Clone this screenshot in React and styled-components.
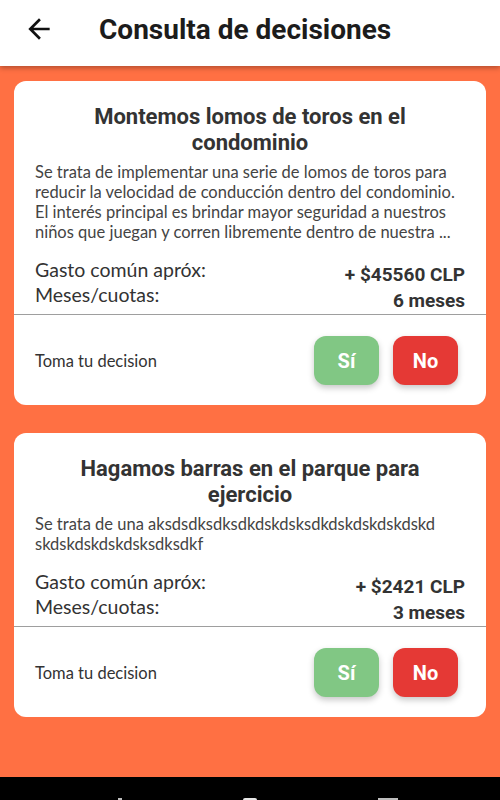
import styled, { createGlobalStyle } from "styled-components"

const Global = createGlobalStyle`
    html, body {
        margin: 0;
        padding: 0;
        background: #ff7043;
    }
    * {
        box-sizing: border-box;
    }
`

const Screen = styled.div`
    width: 500px;
    height: 800px;
    display: flex;
    flex-direction: column;
    background: #ff7043;
    overflow: hidden;
`

const Header = styled.header`
    height: 66px;
    flex-shrink: 0;
    background: #ffffff;
    display: flex;
    align-items: center;
    padding: 0 0 0 23px;
    gap: 44px;
    box-shadow: 0 2px 5px rgba(0, 0, 0, 0.3);
    position: relative;
    z-index: 1;
`

const BackButton = styled.button`
    background: none;
    border: none;
    padding: 0;
    width: 32px;
    height: 32px;
    display: flex;
    align-items: center;
    justify-content: center;
    color: #111;
    margin-top: -8px;
`

const Title = styled.h1`
    margin: 0;
    margin-top: -8px;
    font-family: Roboto, "Liberation Sans", sans-serif;
    font-weight: 700;
    font-size: 28px;
    color: #1c1c1c;
`

const List = styled.main`
    flex: 1;
    display: flex;
    flex-direction: column;
    gap: 28px;
    padding: 15px 14px;
`

const Card = styled.section`
    background: #ffffff;
    border-radius: 12px;
    overflow: hidden;
`

const Body = styled.div`
    padding: 23px 21px 0 21px;
`

const CardTitle = styled.h2`
    margin: 0 0 6px 0;
    padding: 0 34px;
    text-align: center;
    font-family: Roboto, "Liberation Sans", sans-serif;
    font-weight: 700;
    font-size: 22px;
    line-height: 26px;
    color: #333333;
`

const Description = styled.p`
    margin: 0 0 15px 0;
    font-family: Lato, "Liberation Sans", sans-serif;
    font-size: 16.5px;
    line-height: 20px;
    color: #444444;
`

const Detail = styled.div`
    display: grid;
    grid-template-columns: 1fr auto;
`

const Labels = styled.div`
    display: flex;
    flex-direction: column;
    font-family: Lato, "Liberation Sans", sans-serif;
    font-size: 19.5px;
    line-height: 25px;
    color: #333333;
`

const Values = styled.div`
    display: flex;
    flex-direction: column;
    align-items: flex-end;
    padding-top: 5px;
    font-family: Roboto, "Liberation Sans", sans-serif;
    font-weight: 700;
    font-size: 19px;
    line-height: 26px;
    color: #333333;
`

const Footer = styled.div`
    border-top: 1px solid #9e9e9e;
    display: flex;
    align-items: center;
    justify-content: space-between;
    padding: 21px 28px 20px 21px;
`

const Prompt = styled.span`
    font-family: Lato, "Liberation Sans", sans-serif;
    font-size: 16.5px;
    color: #333333;
`

const Buttons = styled.div`
    display: flex;
    gap: 14px;
`

const Vote = styled.button`
    width: 65px;
    height: 49px;
    border: none;
    border-radius: 12px;
    background: ${p => p.$yes ? "#81c784" : "#e53935"};
    color: #ffffff;
    font-family: Roboto, "Liberation Sans", sans-serif;
    font-weight: 700;
    font-size: 20px;
    box-shadow: 0 3px 6px rgba(0, 0, 0, 0.22);
`

const NavBar = styled.div`
    height: 23px;
    flex-shrink: 0;
    background: #000000;
    position: relative;
`

const NavMark = styled.span`
    position: absolute;
    bottom: 0;
    left: ${p => p.$x}px;
    width: ${p => p.$w}px;
    height: 2px;
    border-radius: ${p => p.$round ? "7px 7px 0 0" : "0"};
    background: ${p => p.$light ? "#e6e6e6" : "#bdbdbd"};
`

const decisiones = [
    {
        titulo: "Montemos lomos de toros en el condominio",
        texto: "Se trata de implementar una serie de lomos de toros para reducir la velocidad de conducción dentro del condominio. El interés principal es brindar mayor seguridad a nuestros niños que juegan y corren libremente dentro de nuestra ...",
        gasto: "+ $45560 CLP",
        meses: "6 meses",
    },
    {
        titulo: "Hagamos barras en el parque para ejercicio",
        texto: "Se trata de una aksdsdksdksdkdskdsksdkdskdskdskdskd skdskdskdskdsksdksdkf",
        gasto: "+ $2421 CLP",
        meses: "3 meses",
    },
]

export default function App() {
    return (
        <Screen>
            <Global />
            <Header>
                <BackButton aria-label="volver">
                    <svg width="32" height="32" viewBox="0 0 24 24">
                        <path d="M20 11H7.83l5.59-5.59L12 4l-8 8 8 8 1.41-1.41L7.83 13H20v-2z" fill="currentColor" />
                    </svg>
                </BackButton>
                <Title>Consulta de decisiones</Title>
            </Header>
            <List>
                {decisiones.map(d => (
                    <Card key={d.titulo}>
                        <Body>
                            <CardTitle>{d.titulo}</CardTitle>
                            <Description>{d.texto}</Description>
                            <Detail>
                                <Labels>
                                    <span>Gasto común apróx:</span>
                                    <span>Meses/cuotas:</span>
                                </Labels>
                                <Values>
                                    <span>{d.gasto}</span>
                                    <span>{d.meses}</span>
                                </Values>
                            </Detail>
                        </Body>
                        <Footer>
                            <Prompt>Toma tu decision</Prompt>
                            <Buttons>
                                <Vote $yes>Sí</Vote>
                                <Vote>No</Vote>
                            </Buttons>
                        </Footer>
                    </Card>
                ))}
            </List>
            <NavBar>
                <NavMark $x={118} $w={4} />
                <NavMark $x={243} $w={14} $round $light />
                <NavMark $x={378} $w={20} />
            </NavBar>
        </Screen>
    )
}
